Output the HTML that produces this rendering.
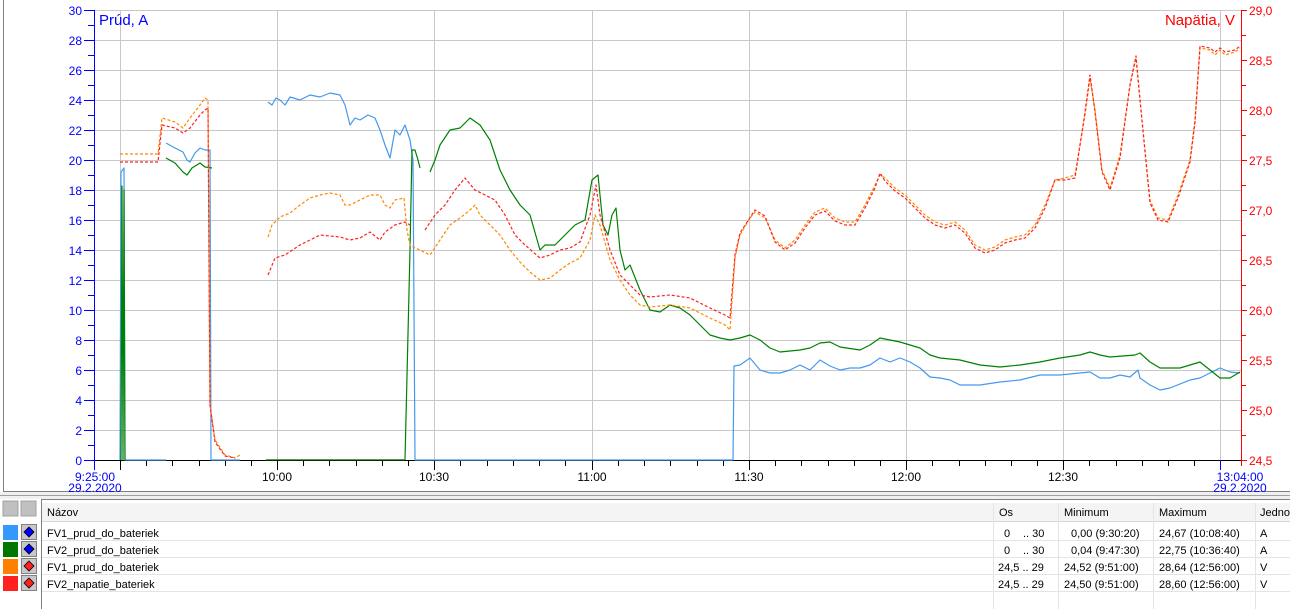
<!DOCTYPE html>
<html><head><meta charset="utf-8"><style>
body{margin:0;background:#fff;width:1290px;height:609px;overflow:hidden;font-family:"Liberation Sans",sans-serif}
</style></head><body>
<svg width="1290" height="609" xmlns="http://www.w3.org/2000/svg" font-family="Liberation Sans, sans-serif">
<rect x="0" y="0" width="1290" height="609" fill="#fff"/>
<!-- chart frame -->
<line x1="3.5" y1="0" x2="3.5" y2="492" stroke="#808080"/>
<line x1="3" y1="491.5" x2="1290" y2="491.5" stroke="#808080"/>
<rect x="0" y="492" width="1290" height="7" fill="#f0f0f0"/>
<line x1="0" y1="495.5" x2="1290" y2="495.5" stroke="#a0a0a0"/>
<!-- grid -->
<g stroke="#c8c8c8" stroke-width="1">
<line x1="94" y1="10.5" x2="1241" y2="10.5"/><line x1="94" y1="40.5" x2="1241" y2="40.5"/><line x1="94" y1="70.5" x2="1241" y2="70.5"/><line x1="94" y1="100.5" x2="1241" y2="100.5"/><line x1="94" y1="130.5" x2="1241" y2="130.5"/><line x1="94" y1="160.5" x2="1241" y2="160.5"/><line x1="94" y1="190.5" x2="1241" y2="190.5"/><line x1="94" y1="220.5" x2="1241" y2="220.5"/><line x1="94" y1="250.5" x2="1241" y2="250.5"/><line x1="94" y1="280.5" x2="1241" y2="280.5"/><line x1="94" y1="310.5" x2="1241" y2="310.5"/><line x1="94" y1="340.5" x2="1241" y2="340.5"/><line x1="94" y1="370.5" x2="1241" y2="370.5"/><line x1="94" y1="400.5" x2="1241" y2="400.5"/><line x1="94" y1="430.5" x2="1241" y2="430.5"/>
<line x1="120.5" y1="10" x2="120.5" y2="460"/><line x1="277.5" y1="10" x2="277.5" y2="460"/><line x1="434.5" y1="10" x2="434.5" y2="460"/><line x1="592.5" y1="10" x2="592.5" y2="460"/><line x1="749.5" y1="10" x2="749.5" y2="460"/><line x1="906.5" y1="10" x2="906.5" y2="460"/><line x1="1063.5" y1="10" x2="1063.5" y2="460"/><line x1="1220.5" y1="10" x2="1220.5" y2="460"/>
</g>
<!-- left axis -->
<g stroke="#0000ff"><line x1="94.5" y1="10" x2="94.5" y2="466"/>
<path d="M84 10.5H94M88 25.5H94M84 40.5H94M88 55.5H94M84 70.5H94M88 85.5H94M84 100.5H94M88 115.5H94M84 130.5H94M88 145.5H94M84 160.5H94M88 175.5H94M84 190.5H94M88 205.5H94M84 220.5H94M88 235.5H94M84 250.5H94M88 265.5H94M84 280.5H94M88 295.5H94M84 310.5H94M88 325.5H94M84 340.5H94M88 355.5H94M84 370.5H94M88 385.5H94M84 400.5H94M88 415.5H94M84 430.5H94M88 445.5H94M84 460.5H94"/></g>
<g fill="#0000ff" font-size="12" text-anchor="end">
<text x="82" y="15">30</text><text x="82" y="45">28</text><text x="82" y="75">26</text><text x="82" y="105">24</text><text x="82" y="135">22</text><text x="82" y="165">20</text><text x="82" y="195">18</text><text x="82" y="225">16</text><text x="82" y="255">14</text><text x="82" y="285">12</text><text x="82" y="315">10</text><text x="82" y="345">8</text><text x="82" y="375">6</text><text x="82" y="405">4</text><text x="82" y="435">2</text><text x="82" y="465">0</text></g>
<text x="99" y="25" fill="#0000ff" font-size="15">Prúd, A</text>
<!-- right axis -->
<g stroke="#ff0000"><line x1="1241.5" y1="10" x2="1241.5" y2="466"/>
<path d="M1241 10.5H1247M1241 35.5H1246M1241 60.5H1247M1241 85.5H1246M1241 110.5H1247M1241 135.5H1246M1241 160.5H1247M1241 185.5H1246M1241 210.5H1247M1241 235.5H1246M1241 260.5H1247M1241 285.5H1246M1241 310.5H1247M1241 335.5H1246M1241 360.5H1247M1241 385.5H1246M1241 410.5H1247M1241 435.5H1246M1241 460.5H1247"/></g>
<g fill="#ff0000" font-size="12">
<text x="1249" y="15">29,0</text><text x="1249" y="65">28,5</text><text x="1249" y="115">28,0</text><text x="1249" y="165">27,5</text><text x="1249" y="215">27,0</text><text x="1249" y="265">26,5</text><text x="1249" y="315">26,0</text><text x="1249" y="365">25,5</text><text x="1249" y="415">25,0</text><text x="1249" y="465">24,5</text></g>
<text x="1235" y="25" fill="#ff0000" font-size="15" text-anchor="end">Napätia, V</text>
<!-- bottom axis -->
<line x1="94" y1="460.5" x2="1241" y2="460.5" stroke="#000"/>
<g stroke="#000"><path d="M120.5 460V470M146.5 460V466M172.5 460V466M199.5 460V466M225.5 460V466M251.5 460V466M277.5 460V470M303.5 460V466M329.5 460V466M356.5 460V466M382.5 460V466M408.5 460V466M434.5 460V470M460.5 460V466M487.5 460V466M513.5 460V466M539.5 460V466M565.5 460V466M592.5 460V470M618.5 460V466M644.5 460V466M670.5 460V466M697.5 460V466M723.5 460V466M749.5 460V470M775.5 460V466M801.5 460V466M828.5 460V466M854.5 460V466M880.5 460V466M906.5 460V470M932.5 460V466M959.5 460V466M985.5 460V466M1011.5 460V466M1037.5 460V466M1063.5 460V470M1089.5 460V466M1116.5 460V466M1142.5 460V466M1168.5 460V466M1194.5 460V466M1220.5 460V470"/></g>
<path d="M94.5 460V470M1220.5 460V470" stroke="#0000ff"/>
<g font-size="12" text-anchor="middle">
<text x="95" y="481" fill="#0000ff">9:25:00</text><text x="95" y="492" fill="#0000ff">29.2.2020</text>
<text x="277" y="481">10:00</text><text x="434" y="481">10:30</text><text x="592" y="481">11:00</text><text x="749" y="481">11:30</text><text x="906" y="481">12:00</text><text x="1063" y="481">12:30</text>
<text x="1240" y="481" fill="#0000ff">13:04:00</text><text x="1240" y="492" fill="#0000ff">29.2.2020</text></g>
<!-- series -->
<g fill="none" stroke-width="1.2" stroke-linejoin="round">
<polyline stroke="#4499ee" points="120,460 121,172 124,168 125,460 166,460"/>
<polyline stroke="#4499ee" points="166,143 175,148 183,152 187,160 190,162 195,153 200,148 205,150 210,150 211,460 240,460"/>
<polyline stroke="#4499ee" points="268,102 272,105 276,98 280,100 285,105 290,97 300,100 310,95 320,97 330,93 340,95 345,105 350,125 355,118 360,120 368,115 375,118 380,130 385,145 390,158 395,130 400,135 405,125 410,140 413,160 415,460 733,460 734,366 740,365 750,358 760,370 770,373 780,373 790,370 800,365 810,370 820,360 830,366 840,370 850,368 860,368 870,365 880,358 890,362 900,358 910,362 920,368 930,377 940,378 950,380 960,385 980,385 1000,382 1020,380 1040,375 1060,375 1080,373 1090,372 1100,378 1110,378 1120,375 1130,377 1138,370 1140,378 1150,385 1160,390 1170,388 1190,380 1200,378 1210,373 1220,368 1230,372 1240,373"/>
<polyline stroke="#008000" points="121,460 122,186 123,460 124,190 125,460"/>
<polyline stroke="#008000" points="166,158 175,163 183,172 187,175 192,168 200,163 205,167 212,168"/>
<polyline stroke="#005000" points="266,460 405,460"/>
<polyline stroke="#008000" points="405,460 410,250 412,150 415,150 418,160 420,168"/>
<polyline stroke="#008000" points="430,172 435,160 440,145 450,130 460,128 470,118 480,125 490,140 495,155 500,170 510,190 520,205 530,215 540,250 545,245 555,245 565,235 575,225 585,220 592,180 598,175 603,225 608,235 612,215 616,208 620,250 625,270 630,265 640,290 650,310 660,312 670,305 680,308 690,315 700,325 710,335 720,338 730,340 740,338 750,335 760,340 770,348 780,352 800,350 810,348 820,343 830,342 840,347 860,350 870,345 880,338 890,340 900,342 910,345 920,348 930,355 940,358 960,360 980,365 1000,367 1020,365 1040,362 1060,358 1080,355 1090,352 1100,355 1110,357 1135,355 1140,353 1150,362 1160,368 1180,368 1200,362 1210,370 1220,378 1230,378 1240,372"/>
<g stroke-dasharray="3,2">
<polyline stroke="#ff8800" points="120,154 158,154 162,118 175,122 183,128 190,118 200,105 205,98 208,100 210,405 215,440 225,455 235,458 240,455"/>
<polyline stroke="#ff8800" points="268,237 272,225 280,217 290,213 300,205 310,198 320,195 330,193 340,195 345,205 350,205 360,200 370,195 380,195 385,205 390,208 395,200 404,198 407,230 410,245 415,248 420,250 430,255 440,240 450,225 460,218 470,210 475,205 480,215 490,225 500,235 510,250 520,262 530,272 540,280 550,278 560,270 570,263 580,258 590,240 595,215 600,225 610,260 620,280 630,295 640,305 650,307 670,305 690,308 710,318 725,325 730,330 735,258 740,235 750,218 755,212 765,218 775,240 785,248 795,240 805,225 815,212 825,208 835,218 845,222 855,222 865,205 875,185 880,175 885,178 895,188 905,195 915,205 925,215 935,222 945,225 955,222 965,230 975,245 985,250 995,247 1005,240 1015,237 1025,235 1035,225 1045,205 1055,180 1065,178 1075,175 1085,115 1090,78 1095,110 1102,170 1110,188 1120,155 1130,85 1136,58 1140,100 1150,200 1158,218 1168,220 1178,195 1190,160 1195,120 1200,48 1210,50 1215,55 1220,50 1225,55 1235,52 1240,48"/>
<polyline stroke="#ff2020" points="120,162 158,162 162,125 175,128 183,133 190,128 200,115 205,110 208,108 210,405 215,442 225,456 235,458"/>
<polyline stroke="#ff2020" points="268,275 275,258 285,255 300,245 320,235 340,237 350,240 360,238 370,232 380,240 385,232 395,225 405,222 410,225"/>
<polyline stroke="#ff2020" points="425,230 435,215 445,205 455,190 465,178 475,190 485,195 495,200 505,215 515,235 525,245 540,258 550,255 560,250 570,248 580,242 590,215 596,185 600,215 610,250 620,275 630,285 640,295 650,297 670,295 690,298 710,308 725,315 730,318 735,255 740,233 755,210 765,216 775,242 785,250 795,243 805,228 815,215 825,211 835,221 845,225 855,225 865,208 875,188 880,173 885,181 895,191 905,198 915,208 925,218 935,225 945,228 955,225 965,233 975,248 985,253 995,250 1005,243 1015,240 1025,238 1035,228 1045,208 1055,180 1065,180 1075,178 1085,112 1090,75 1095,112 1102,172 1110,190 1120,158 1130,85 1136,56 1140,100 1150,203 1158,220 1168,222 1178,198 1190,162 1195,122 1200,46 1210,48 1215,52 1220,48 1225,52 1235,50 1240,46"/>
</g></g>
<!-- legend -->
<rect x="3" y="501" width="15" height="15" fill="#c0c0c0" stroke="#a0a0a0"/>
<rect x="21" y="501" width="15" height="15" fill="#c0c0c0" stroke="#a0a0a0"/>
<rect x="3" y="525" width="15" height="15" fill="#3399ff"/>
<rect x="3" y="542" width="15" height="15" fill="#007700"/>
<rect x="3" y="559" width="15" height="15" fill="#ff8000"/>
<rect x="3" y="576" width="15" height="15" fill="#ff2020"/>
<g stroke="#808080" fill="#c8c8c8"><rect x="21.5" y="524.5" width="15" height="15"/><rect x="21.5" y="541.5" width="15" height="15"/><rect x="21.5" y="558.5" width="15" height="15"/><rect x="21.5" y="575.5" width="15" height="15"/></g>
<g stroke="#000" stroke-width="0.8"><path d="M29 527L34 532L29 537L24 532Z" fill="#0000ff"/><path d="M29 544L34 549L29 554L24 549Z" fill="#0000ff"/><path d="M29 561L34 566L29 571L24 566Z" fill="#ff2020"/><path d="M29 578L34 583L29 588L24 583Z" fill="#ff2020"/></g>
<line x1="41.5" y1="499" x2="41.5" y2="609" stroke="#808080"/>
<line x1="41" y1="499.5" x2="1290" y2="499.5" stroke="#808080"/>
<rect x="42" y="503" width="1248" height="18" fill="#f4f4f4"/>
<line x1="42" y1="521.5" x2="1290" y2="521.5" stroke="#d8d8d8"/>
<g stroke="#e4e4e4"><line x1="42" y1="540.5" x2="1290" y2="540.5"/><line x1="42" y1="557.5" x2="1290" y2="557.5"/><line x1="42" y1="574.5" x2="1290" y2="574.5"/><line x1="42" y1="591.5" x2="1290" y2="591.5"/>
<line x1="993.5" y1="503" x2="993.5" y2="609"/><line x1="1058.5" y1="503" x2="1058.5" y2="609"/><line x1="1153.5" y1="503" x2="1153.5" y2="609"/><line x1="1255.5" y1="503" x2="1255.5" y2="609"/></g>
<g font-size="11" fill="#000">
<text x="47" y="516">Názov</text><text x="999" y="516">Os</text><text x="1064" y="516">Minimum</text><text x="1159" y="516">Maximum</text><text x="1260" y="516">Jedno</text>
<text x="47" y="537">FV1_prud_do_bateriek</text><text x="47" y="554">FV2_prud_do_bateriek</text><text x="47" y="571">FV1_prud_do_bateriek</text><text x="47" y="588">FV2_napatie_bateriek</text>
<text x="1004" y="537">0</text><text x="1023" y="537">.. 30</text><text x="1004" y="554">0</text><text x="1023" y="554">.. 30</text>
<text x="998" y="571">24,5 .. 29</text><text x="998" y="588">24,5 .. 29</text>
<text x="1071" y="537">0,00 (9:30:20)</text><text x="1071" y="554">0,04 (9:47:30)</text><text x="1064" y="571">24,52 (9:51:00)</text><text x="1064" y="588">24,50 (9:51:00)</text>
<text x="1159" y="537">24,67 (10:08:40)</text><text x="1159" y="554">22,75 (10:36:40)</text><text x="1159" y="571">28,64 (12:56:00)</text><text x="1159" y="588">28,60 (12:56:00)</text>
<text x="1260" y="537">A</text><text x="1260" y="554">A</text><text x="1260" y="571">V</text><text x="1260" y="588">V</text></g>
</svg>
</body></html>
